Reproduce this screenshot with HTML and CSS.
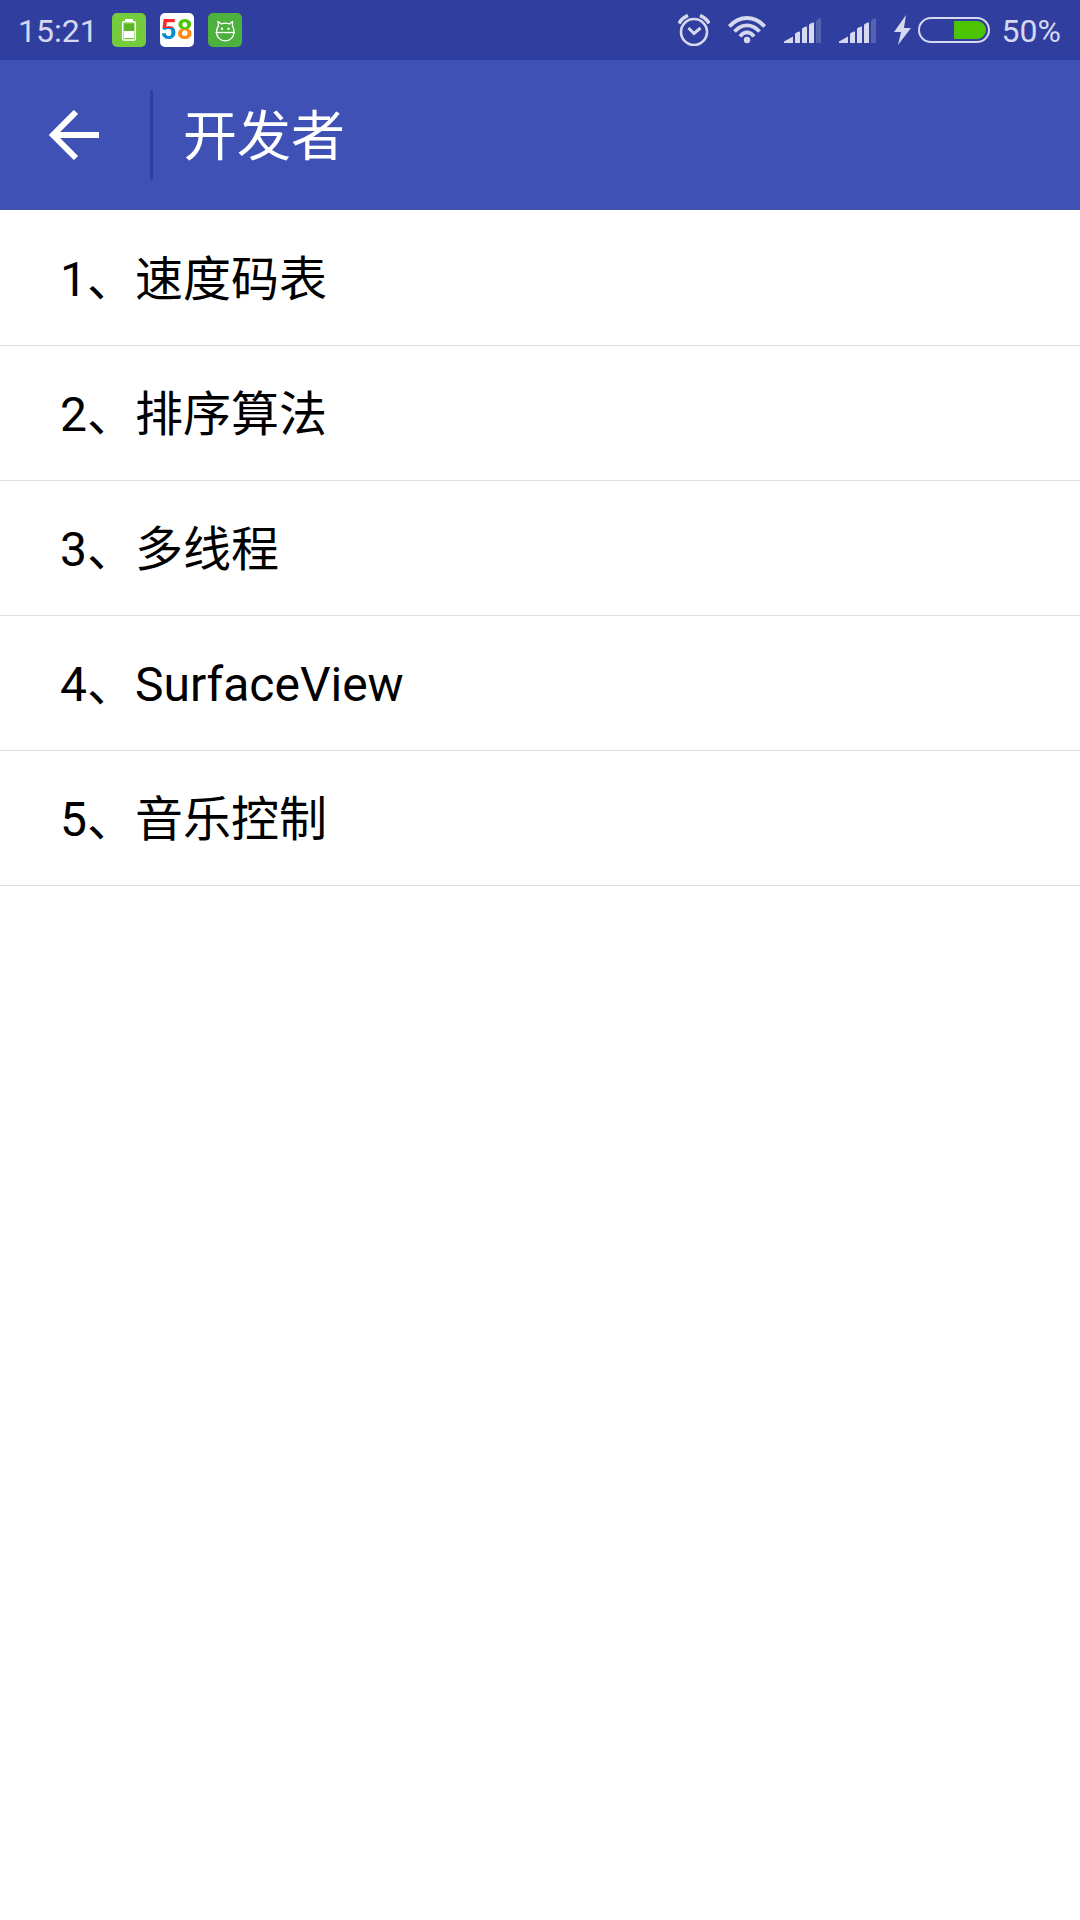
FILE: index.html
```html
<!DOCTYPE html>
<html lang="zh-CN">
<head>
<meta charset="utf-8">
<meta name="viewport" content="width=device-width, initial-scale=1">
<title>开发者</title>
<link rel="stylesheet" href="styles.css">
</head>
<body>
<div class="status-bar">
  <div class="status-left">
    <time class="status-text">15:21</time>
    <svg class="app-icon" width="34" height="34" viewBox="0 0 34 34" aria-hidden="true">
      <rect width="34" height="34" rx="5" fill="#74cb3c"/>
      <path d="M13 7h8" stroke="#fff" stroke-width="2"/>
      <rect x="10.700" y="8.700" width="12.600" height="18.300" rx="1" fill="none" stroke="#fff" stroke-width="1.500"/>
      <rect x="12" y="11" width="10" height="7" fill="#5db52c"/>
      <rect x="12" y="18" width="10" height="7" fill="#fff"/>
    </svg>
    <span class="app-icon logo-58"><span class="logo-five">5</span><span class="logo-eight">8</span></span>
    <svg class="app-icon" width="34" height="34" viewBox="0 0 34 34" aria-hidden="true">
      <rect width="34" height="34" rx="5" fill="#4db23d"/>
      <g fill="none" stroke="#fff" stroke-width="1.300" stroke-linejoin="round">
        <path d="M10.500 13 10 8.500 13.500 11Q17.500 9.300 21.500 11L24.500 8.500 24.500 13Q26 15.500 26 19.500A8.700 8.300 0 0 1 8.500 19.500Q8.500 15.500 10.500 13Z"/>
        <path d="M7.500 19.500h19.500"/>
      </g>
      <circle cx="14" cy="15.700" r="1.200" fill="#fff"/>
      <circle cx="20.500" cy="15.700" r="1.200" fill="#fff"/>
    </svg>
  </div>
  <div class="status-right">
    <svg class="alarm" width="32" height="32" viewBox="0 0 32 32" aria-hidden="true">
      <g fill="none" stroke="#d5d8ee">
        <circle cx="16" cy="18" r="13" stroke-width="2.600"/>
        <path d="M10.500 14 16 19.500 22.500 14" stroke-width="3"/>
        <path d="M1 9.500Q3.500 4 10 1.500M31 9.500Q28.500 4 22 1.500" stroke-width="3.500"/>
      </g>
    </svg>
    <svg class="wifi" width="38" height="28" viewBox="0 0 38 28" aria-hidden="true">
      <g fill="none" stroke="#d5d8ee" stroke-width="3.800">
        <path d="M1.300 10.500Q9 2 19 2T36.700 10.500"/>
        <path d="M6.500 15.500Q12 9.300 19 9.300T31.500 15.500"/>
        <path d="M12 20.500Q15 16.300 19 16.300T26 20.500"/>
      </g>
      <circle cx="19" cy="24" r="3.200" fill="#d5d8ee"/>
    </svg>
    <svg class="signal" width="37" height="25" viewBox="0 0 37 25" aria-hidden="true">
      <path fill="#d5d8ee" d="M0 25V23.500L9 18.500V25ZM11 25V16Q12 14 16 13.500V25ZM18 25V11Q19 9 23 8.500V25ZM25 25V7Q26 5 30 4.500V25Z"/>
      <path fill="#5562b1" d="M32 25V3Q33 1 37 0V25Z"/>
    </svg>
    <svg class="signal" width="37" height="25" viewBox="0 0 37 25" aria-hidden="true">
      <path fill="#d5d8ee" d="M0 25V23.500L9 18.500V25ZM11 25V16Q12 14 16 13.500V25ZM18 25V11Q19 9 23 8.500V25ZM25 25V7Q26 5 30 4.500V25Z"/>
      <path fill="#5562b1" d="M32 25V3Q33 1 37 0V25Z"/>
    </svg>
    <svg class="bolt" width="18" height="30" viewBox="0 0 18 30" aria-hidden="true">
      <path fill="#d5d8ee" d="M12 0 0 17H7L4 30 17 13H10Z"/>
    </svg>
    <svg class="battery" width="72" height="26" viewBox="0 0 72 26" aria-hidden="true">
      <rect x="1" y="1" width="70" height="24" rx="12" fill="none" stroke="#d5d8ee" stroke-width="2"/>
      <path fill="#4cc403" d="M36 4H59A9 9 0 0 1 59 22H36Z"/>
    </svg>
    <span class="status-text">50%</span>
  </div>
</div>
<header class="app-bar">
  <button class="back" type="button" aria-label="返回">
    <svg width="50" height="50" viewBox="0 0 50 50" aria-hidden="true">
      <path d="M27 2 4 25 27 48M4 25H50" fill="none" stroke="#fff" stroke-width="6"/>
    </svg>
  </button>
  <h1 class="title">开发者</h1>
</header>
<main>
  <ul class="menu">
    <li><a class="menu-item" href="#speed">1、速度码表</a></li>
    <li><a class="menu-item" href="#sort">2、排序算法</a></li>
    <li><a class="menu-item" href="#thread">3、多线程</a></li>
    <li><a class="menu-item" href="#surface">4、SurfaceView</a></li>
    <li><a class="menu-item" href="#music">5、音乐控制</a></li>
  </ul>
</main>
</body>
</html>
```
FILE: styles.css
```css
* {
  box-sizing: border-box;
}

body {
  margin: 0;
  background: #fff;
  color: #000;
  font-family: Roboto, "Noto Sans CJK SC", sans-serif;
}

svg {
  display: block;
  flex: none;
}

.status-bar {
  display: flex;
  align-items: center;
  justify-content: space-between;
  height: 60px;
  padding: 0 19px 0 18px;
  background: #303f9f;
}

.status-left,
.status-right {
  display: flex;
  align-items: center;
}

.status-left {
  gap: 14px;
}

.status-text {
  padding-top: 2px;
  color: #d5d8ee;
  font-size: 32px;
  line-height: 40px;
}

.logo-58 {
  display: flex;
  align-items: center;
  justify-content: center;
  width: 34px;
  height: 34px;
  border-radius: 5px;
  background: #fff;
  font-size: 28px;
  font-weight: 700;
  line-height: 34px;
}

.logo-five,
.logo-eight {
  background-clip: text;
  -webkit-background-clip: text;
  color: transparent;
}

.logo-five {
  background-image: linear-gradient(#f8282d 45%, #078cd8 45%);
}

.logo-eight {
  background-image: linear-gradient(#4cc403 48%, #fc8c14 48%);
}

.wifi,
.signal,
.bolt {
  margin-left: 18px;
}

.battery {
  margin: 0 12px 0 6px;
}

.app-bar {
  display: flex;
  align-items: center;
  height: 150px;
  background: #3f51b5;
}

.back {
  display: flex;
  align-items: center;
  justify-content: center;
  width: 153px;
  height: 90px;
  padding: 0 2px 0 0;
  border: 0;
  border-right: 3px solid #303f9f;
  background: none;
}

.title {
  margin: 0;
  padding: 6px 0 0 30px;
  color: #fff;
  font-size: 54px;
  font-weight: 400;
  line-height: 80px;
}

.menu {
  margin: 0;
  padding: 1px 0 0;
  list-style: none;
}

.menu-item {
  display: block;
  padding: 37px 60px 33px;
  border-bottom: 1px solid #ddd;
  color: inherit;
  font-size: 48px;
  line-height: 64px;
  text-decoration: none;
}
```
